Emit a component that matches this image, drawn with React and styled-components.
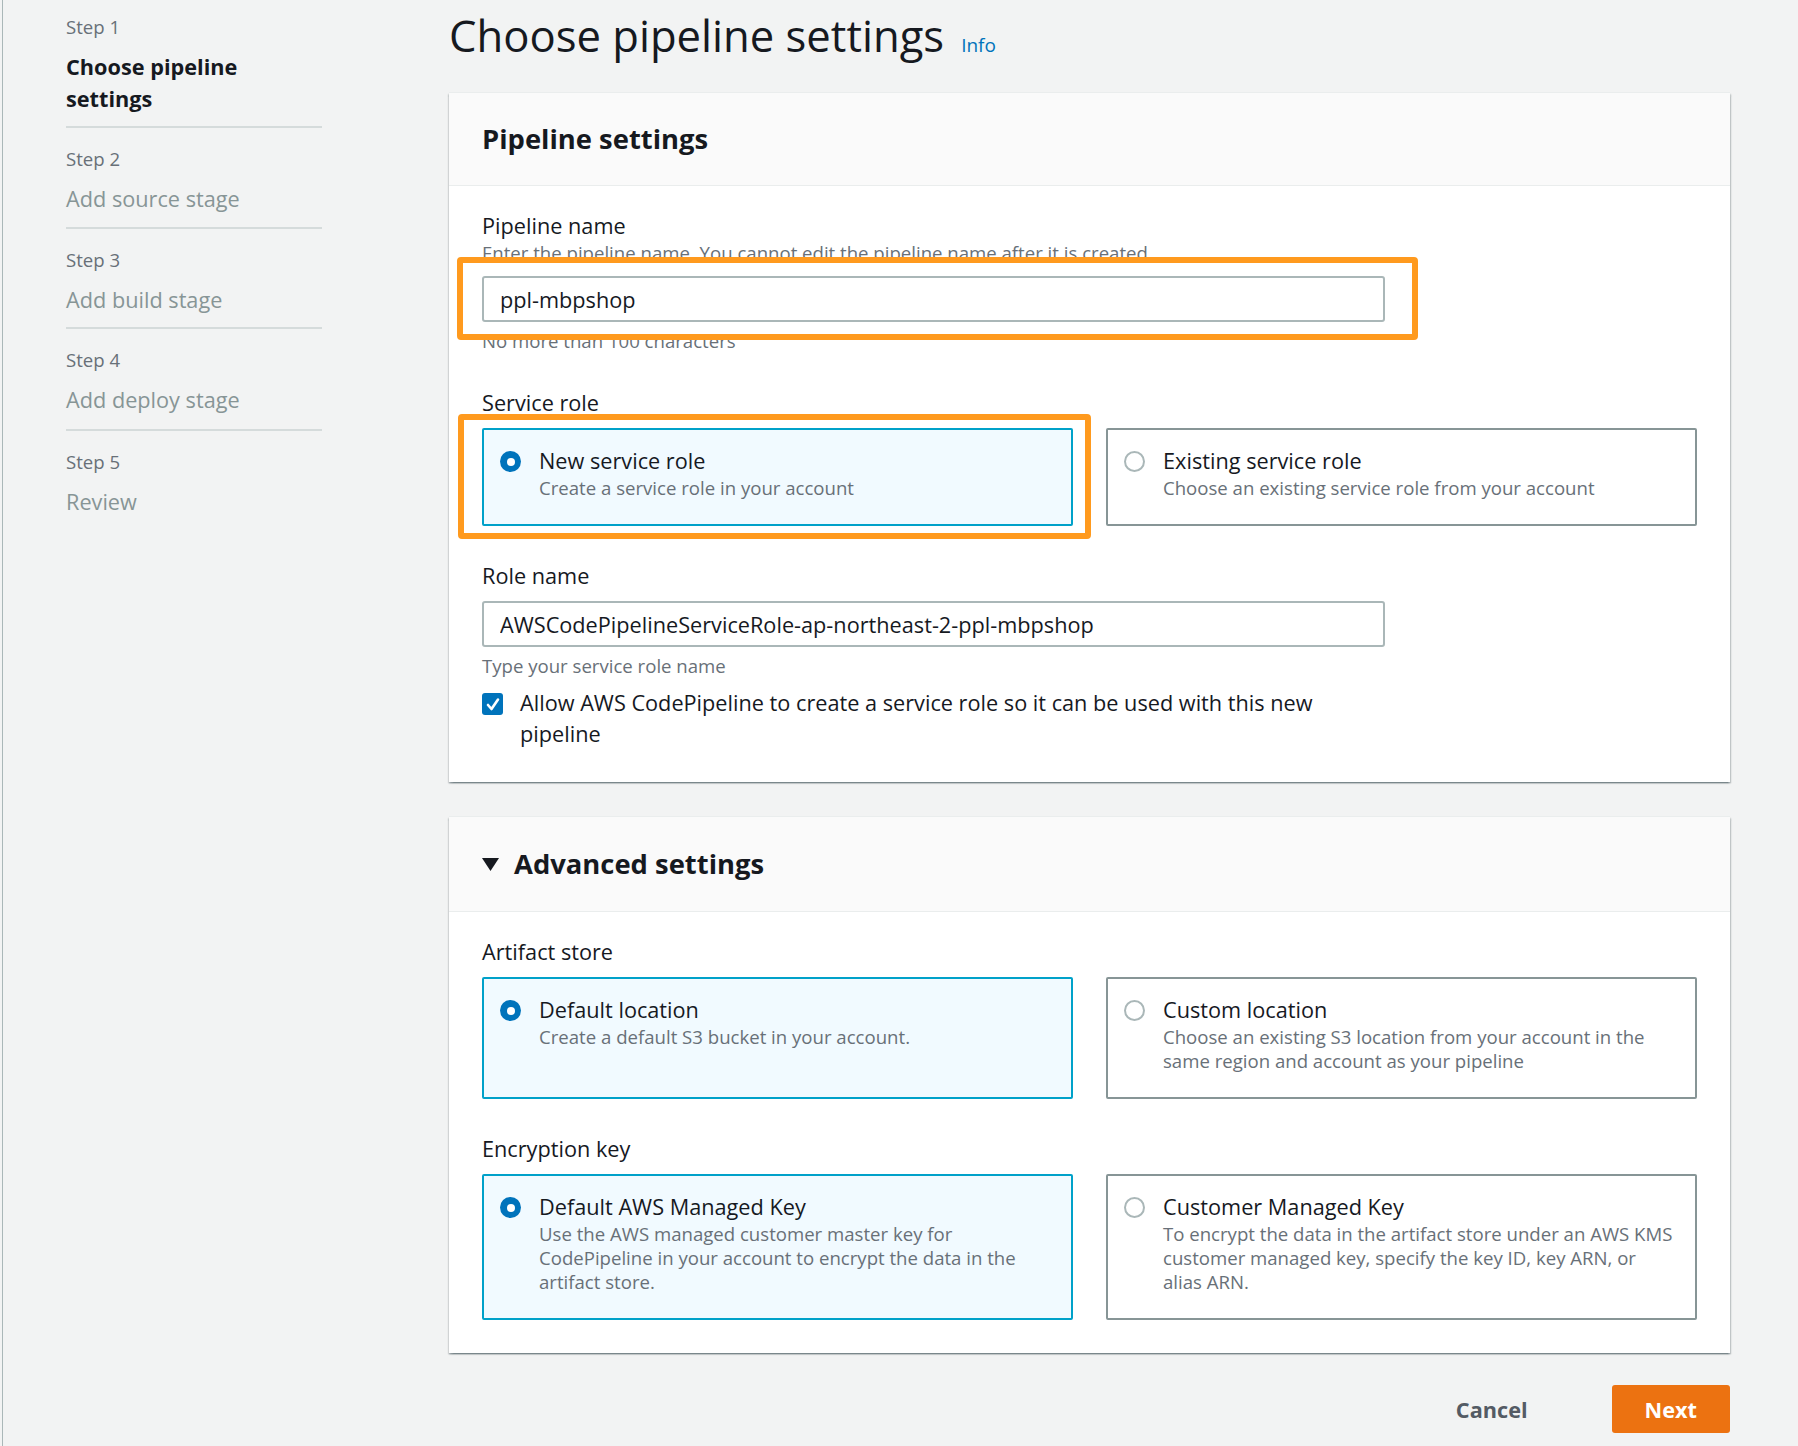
import React from 'react'
import styled, {createGlobalStyle} from 'styled-components'

const GlobalStyle = createGlobalStyle`
  html, body {
    margin: 0;
    padding: 0;
    background: #f2f3f3;
  }
  body {
    font-family: "Open Sans", "Noto Sans", sans-serif;
    color: #16191f;
  }
  * { box-sizing: border-box; }
`

const Page = styled.div`
  display: flex;
  min-height: 1446px;
  margin-left: 2px;
  border-left: 1px solid #aab7b8;
`

const Sidebar = styled.nav`
  flex: 0 0 446px;
  padding-left: 63px;
`

const StepList = styled.ol`
  list-style: none;
  margin: 0;
  padding: 15px 0 0;
  width: 256px;
`

const StepItem = styled.li`
  padding: 19px 0 12px;
  border-top: 2px solid #d5dbdb;
  &:first-child {
    padding-top: 0;
    border-top: 0;
  }
  &:nth-child(4) {
    padding-bottom: 13px;
  }
`

const StepLabel = styled.span`
  display: block;
  font-size: 18.6px;
  line-height: 24px;
  color: #687078;
`

const StepName = styled.span`
  display: block;
  margin-top: 12px;
  font-size: 21.7px;
  line-height: 31.5px;
  font-weight: ${p => p.$active ? 700 : 400};
  color: ${p => p.$active ? '#16191f' : '#879596'};
`

const Main = styled.main`
  flex: 0 0 1281px;
  padding-top: 9px;
`

const TitleRow = styled.div`
  display: flex;
  align-items: baseline;
  gap: 17px;
  margin-bottom: 31px;
`

const Title = styled.h1`
  margin: 0;
  font-size: 43.6px;
  line-height: 52px;
  font-weight: 400;
`

const InfoLink = styled.a`
  font-size: 19px;
  color: #0073bb;
  text-decoration: none;
`

const Panel = styled.section`
  background: #fff;
  border-top: 1px solid #eaeded;
  box-shadow: 0 1.5px 1.5px 0 rgba(0, 28, 36, 0.3),
    1.5px 1.5px 1.5px 0 rgba(0, 28, 36, 0.15),
    -1.5px 1.5px 1.5px 0 rgba(0, 28, 36, 0.15);
  & + & {
    margin-top: 34px;
  }
`

const PanelHeader = styled.header`
  height: ${p => p.$height}px;
  display: flex;
  align-items: center;
  gap: 15px;
  padding: 0 33px;
  background: #fafafa;
  border-bottom: 1px solid #eaeded;
`

const PanelTitle = styled.h2`
  margin: 0;
  font-size: 27.4px;
  line-height: 40px;
  font-weight: 700;
`

const PanelBody = styled.div`
  padding: 24px 33px 33px;
`

const Field = styled.div`
  & + & {
    margin-top: 34px;
  }
`

const Label = styled.label`
  display: block;
  font-size: 21.7px;
  line-height: 31px;
`

const Hint = styled.div`
  font-size: 18.6px;
  line-height: 24px;
  color: #687078;
  margin-top: ${p => p.$below ? '7px' : '0'};
`

const Annotated = styled.div`
  position: relative;
  width: ${p => p.$width || 'auto'};
  margin-top: ${p => p.$top || '0'};
`

const AnnotationFrame = styled.span`
  position: absolute;
  inset: ${p => p.$inset};
  z-index: 1;
  background: #fff;
  border: 6.5px solid #ff9a1e;
  border-radius: 4px;
`

const Input = styled.input`
  position: relative;
  z-index: 2;
  display: block;
  width: 903px;
  height: 46px;
  margin-top: ${p => p.$top || '0'};
  padding: 0 16px;
  border: 2px solid #aab7b8;
  border-radius: 3px;
  background: #fff;
  font-family: inherit;
  font-size: 21.7px;
  color: #16191f;
  outline: none;
`

const TileGrid = styled.div`
  display: grid;
  grid-template-columns: 1fr 1fr;
  gap: 33px;
  margin-top: 10px;
`

const Tile = styled.div`
  position: relative;
  z-index: 2;
  height: 100%;
  display: flex;
  align-items: flex-start;
  gap: 18px;
  padding: 15px 17px 24px 16px;
  border: 2px solid ${p => p.$selected ? '#00a1c9' : '#879596'};
  border-radius: 2px;
  background: ${p => p.$selected ? '#f1faff' : '#fff'};
`

const Radio = styled.span`
  flex: 0 0 21px;
  height: 21px;
  margin-top: 6px;
  border-radius: 50%;
  display: grid;
  place-items: center;
  background: ${p => p.$checked ? '#0073bb' : '#fff'};
  border: ${p => p.$checked ? '0' : '2px solid #aab7b8'};
  &::after {
    content: '';
    width: 8px;
    height: 8px;
    border-radius: 50%;
    background: #fff;
    display: ${p => p.$checked ? 'block' : 'none'};
  }
`

const TileText = styled.div`
  flex: 1;
`

const TileTitle = styled.div`
  font-size: 21.7px;
  line-height: 31px;
`

const TileDesc = styled.div`
  font-size: 18.6px;
  line-height: 24px;
  color: #687078;
`

const CheckRow = styled.div`
  display: flex;
  align-items: flex-start;
  gap: 17px;
  width: 903px;
  margin-top: 9px;
`

const Checkbox = styled.span`
  flex: 0 0 21px;
  height: 22px;
  margin-top: 6px;
  border-radius: 3px;
  background: #0073bb;
  display: grid;
  place-items: center;
`

const CheckLabel = styled.span`
  font-size: 21.7px;
  line-height: 31px;
`

const Footer = styled.div`
  display: flex;
  justify-content: flex-end;
  align-items: center;
  gap: 84px;
  margin-top: 32px;
`

const CancelButton = styled.button`
  padding: 0;
  border: 0;
  background: none;
  font-family: inherit;
  font-size: 21.7px;
  font-weight: 700;
  color: #545b64;
`

const NextButton = styled.button`
  height: 48px;
  padding: 0 33px;
  border: 0;
  border-radius: 3px;
  background: #ec7211;
  font-family: inherit;
  font-size: 21.7px;
  font-weight: 700;
  color: #fff;
`

const steps = [
  'Choose pipeline settings',
  'Add source stage',
  'Add build stage',
  'Add deploy stage',
  'Review'
]

function OptionTile({selected, title, desc}) {
  return (
    <Tile $selected={selected}>
      <Radio $checked={selected} />
      <TileText>
        <TileTitle>{title}</TileTitle>
        <TileDesc>{desc}</TileDesc>
      </TileText>
    </Tile>
  )
}

export default function App() {
  return (
    <>
      <GlobalStyle />
      <Page>
        <Sidebar>
          <StepList>
            {steps.map((s, i) => (
              <StepItem key={s}>
                <StepLabel>Step {i + 1}</StepLabel>
                <StepName $active={i === 0}>{s}</StepName>
              </StepItem>
            ))}
          </StepList>
        </Sidebar>

        <Main>
          <TitleRow>
            <Title>Choose pipeline settings</Title>
            <InfoLink href="#">Info</InfoLink>
          </TitleRow>

          <Panel>
            <PanelHeader $height={93}>
              <PanelTitle>Pipeline settings</PanelTitle>
            </PanelHeader>
            <PanelBody>
              <Field>
                <Label>Pipeline name</Label>
                <Hint>Enter the pipeline name. You cannot edit the pipeline name after it is created.</Hint>
                <Annotated $width="903px" $top="11px">
                  <AnnotationFrame $inset="-19px -33px -18px -25px" />
                  <Input defaultValue="ppl-mbpshop" />
                </Annotated>
                <Hint $below>No more than 100 characters</Hint>
              </Field>

              <Field>
                <Label>Service role</Label>
                <TileGrid>
                  <Annotated>
                    <AnnotationFrame $inset="-14px -18px -13px -24px" />
                    <OptionTile selected title="New service role" desc="Create a service role in your account" />
                  </Annotated>
                  <OptionTile title="Existing service role" desc="Choose an existing service role from your account" />
                </TileGrid>
              </Field>

              <Field>
                <Label>Role name</Label>
                <Input $top="10px" defaultValue="AWSCodePipelineServiceRole-ap-northeast-2-ppl-mbpshop" />
                <Hint $below>Type your service role name</Hint>
                <CheckRow>
                  <Checkbox>
                    <svg width="14" height="15" viewBox="0 0 14 15">
                      <polyline points="2,8 5.5,12 12,2.5" fill="none" stroke="#fff" strokeWidth="2.6" strokeLinecap="round" strokeLinejoin="round" />
                    </svg>
                  </Checkbox>
                  <CheckLabel>Allow AWS CodePipeline to create a service role so it can be used with this new pipeline</CheckLabel>
                </CheckRow>
              </Field>
            </PanelBody>
          </Panel>

          <Panel>
            <PanelHeader $height={95}>
              <svg width="17" height="13" viewBox="0 0 17 13">
                <path d="M0 0H17L8.5 13Z" fill="#16191f" />
              </svg>
              <PanelTitle>Advanced settings</PanelTitle>
            </PanelHeader>
            <PanelBody>
              <Field>
                <Label>Artifact store</Label>
                <TileGrid>
                  <OptionTile selected title="Default location" desc="Create a default S3 bucket in your account." />
                  <OptionTile title="Custom location" desc="Choose an existing S3 location from your account in the same region and account as your pipeline" />
                </TileGrid>
              </Field>
              <Field>
                <Label>Encryption key</Label>
                <TileGrid>
                  <OptionTile selected title="Default AWS Managed Key" desc="Use the AWS managed customer master key for CodePipeline in your account to encrypt the data in the artifact store." />
                  <OptionTile title="Customer Managed Key" desc="To encrypt the data in the artifact store under an AWS KMS customer managed key, specify the key ID, key ARN, or alias ARN." />
                </TileGrid>
              </Field>
            </PanelBody>
          </Panel>

          <Footer>
            <CancelButton>Cancel</CancelButton>
            <NextButton>Next</NextButton>
          </Footer>
        </Main>
      </Page>
    </>
  )
}
